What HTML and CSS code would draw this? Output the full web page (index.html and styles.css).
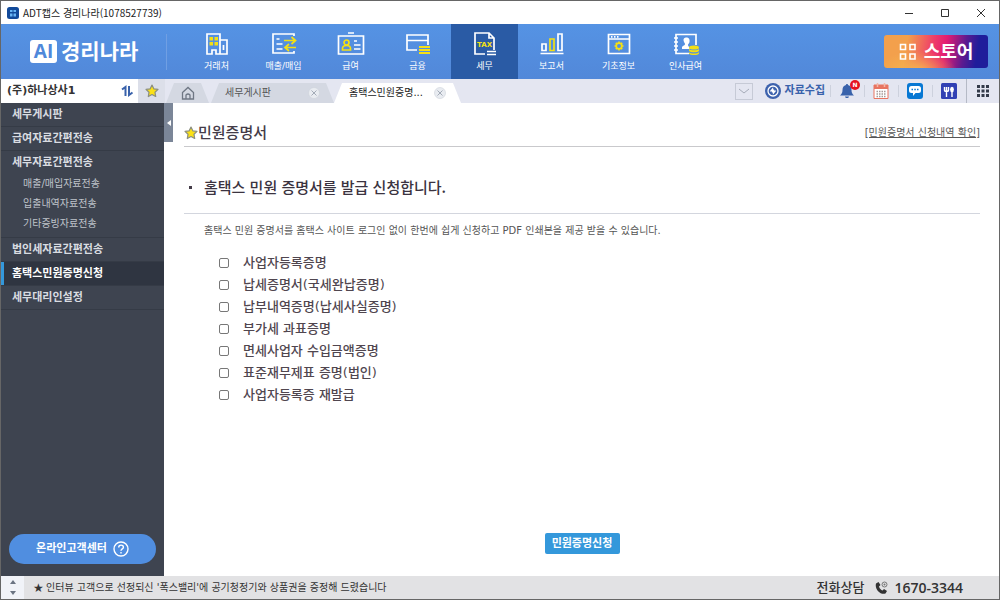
FILE: index.html
```html
<!DOCTYPE html>
<html lang="ko">
<head>
<meta charset="utf-8">
<title>ADT캡스 경리나라</title>
<link rel="stylesheet" href="styles.css">
</head>
<body>
<svg class="defs" aria-hidden="true">
  <symbol id="star" viewBox="0 0 14 14"><path d="M7 1l1.800 3.800 4.200.6-3 2.900.7 4.200L7 10.500l-3.700 2 .7-4.200-3-2.900 4.200-.6z" fill="#fbe116" stroke="#8b8f80" stroke-width="1.200" stroke-linejoin="round"/></symbol>
  <symbol id="close" viewBox="0 0 12 12"><circle cx="6" cy="6" r="5.500" fill="#e9ecf1" stroke="#cdd2da" stroke-width=".6"/><path d="M3.500 3.500l5 5m0-5l-5 5" stroke="#a3abb7" stroke-width="1"/></symbol>
</svg>
<div class="window">
  <div class="titlebar">
    <svg class="app-icon" viewBox="0 0 12 12"><rect width="12" height="12" rx="2.500" fill="#124a9a"/><path d="M3 3h2.500v2H3zM6.500 3H9v2H6.500zM3 6.500h2.500v3H3zM6.500 6.500H9v3H6.500z" fill="#69b6f5"/></svg>
    <span class="app-title">ADT캡스 경리나라(1078527739)</span>
    <button class="win-btn" aria-label="최소화"><svg viewBox="0 0 10 10"><path d="M1 5.500h8" /></svg></button>
    <button class="win-btn" aria-label="최대화"><svg viewBox="0 0 10 10"><path d="M1.500 1.500h7v7h-7z"/></svg></button>
    <button class="win-btn" aria-label="닫기"><svg viewBox="0 0 10 10"><path d="M1 1l8 8M9 1L1 9"/></svg></button>
  </div>

  <header class="header">
    <a class="logo" href="#"><span class="logo-ai">AI</span><span>경리나라</span></a>
    <nav class="nav">
      <a href="#"><svg viewBox="0 0 28 24"><path d="M4 22V2h13v20h-4v-4H9v4zM17 8h7v14h-7M20.500 13v5"/><g class="yf"><rect x="6.500" y="5" width="3.500" height="3.500"/><rect x="11.500" y="5" width="3.500" height="3.500"/><rect x="6.500" y="10" width="3.500" height="3.500"/><rect x="11.500" y="10" width="3.500" height="3.500"/></g></svg>거래처</a>
      <a href="#"><svg viewBox="0 0 28 24"><path d="M24 4V2H3v19h21v-2M6.500 7h3M6.500 12h6M6.500 17h6"/><path class="y" d="M14 8.500H25M21.500 5l4 3.500-4 3.500M26 15.500H15.500M19 12l-4 3.500 4 3.500"/></svg>매출/매입</a>
      <a href="#"><svg viewBox="0 0 28 24"><path d="M1.500 4h25v18h-25zM11 1h6M17 9h3M17 13h6.500M17 17h6.500"/><g class="y"><circle cx="9.500" cy="10.500" r="2.500"/><path d="M5.500 18v-1.500c0-2 1.500-3 4-3s4 1 4 3V18z"/></g></svg>급여</a>
      <a href="#"><svg viewBox="0 0 28 24"><path d="M13 18H3V3h21v10M3 8.500h21"/><path class="y thick" d="M15 15h11M15 18h11M15 21h11"/></svg>금융</a>
      <a href="#" class="active" aria-current="page"><svg viewBox="0 0 28 24"><path d="M14 22H4V1h14l5 5v12M18 1v5h5M16 19.500h9M16 22.500h9"/><text x="6" y="15">TAX</text></svg>세무</a>
      <a href="#"><svg viewBox="0 0 28 24"><path d="M4 12h4v6.500H4zM20 2h4v16.500h-4zM2.500 21.500h23"/><path class="y" d="M12 7h4v11.500h-4z"/></svg>보고서</a>
      <a href="#"><svg viewBox="0 0 28 24"><path d="M3.500 2.500h21v19h-21zM3.500 7h21M6 4.800h1.500M9 4.800h1.500M12 4.800h1.500"/><circle class="y" cx="14" cy="14" r="2.800"/><path class="y" d="M14 9.500v1.700M14 16.800v1.700M9.500 14h1.700M16.800 14h1.700M10.800 10.800l1.200 1.200M16 16l1.200 1.200M17.200 10.800L16 12M12 16l-1.200 1.200"/></svg>기초정보</a>
      <a href="#"><svg viewBox="0 0 28 24"><path d="M17 21.500H4V2.500h20V13M2 6h4M2 10h4M2 14h4M2 18h4"/><path d="M14 5.500c3 0 4 2 3.500 4.500-.3 1.500-1.500 2-1.500 3 0 1.500 1.500 1.500 1.500 3v1H10v-2c1-1.500 3-1.500 3-3 0-1-1.500-2-1.500-4 0-1.500 1-2.500 2.500-2.500z" fill="#fff" stroke="none"/><g class="yf"><ellipse cx="22" cy="15.500" rx="5" ry="2"/><path d="M17 16.800c1 2 9 2 10 0v2c-1 2-9 2-10 0zM17 20c1 2 9 2 10 0v1.500c-1 2-9 2-10 0z"/></g></svg>인사급여</a>
    </nav>
    <a class="store" href="#"><svg viewBox="0 0 18 18"><path d="M1.500 1.500h5v5h-5zM11 1.500h5v5h-5zM1.500 11h5v5h-5zM11 11h5v5h-5z"/></svg>스토어</a>
  </header>

  <div class="subbar">
    <div class="company"><span>(주)하나상사1</span>
      <button class="plain" aria-label="회사 전환"><svg class="swap" viewBox="0 0 13 12"><path d="M1 4.500L4.500 2V11M8 1v9L11.500 7.500" fill="none" stroke="#3962ab" stroke-width="2"/></svg></button>
    </div>
    <button class="plain fav" aria-label="즐겨찾기"><svg class="star"><use href="#star"/></svg></button>
    <div class="tabs">
      <button class="tab home" aria-label="홈"><svg viewBox="0 0 14 14"><path d="M1.500 6.500L7 1.500l5.500 5V13h-11zM5 13V9q2-2 4 0v4" fill="none" stroke="#6f7784" stroke-width="1.300"/></svg></button>
      <button class="tab"><span>세무게시판</span><svg class="close"><use href="#close"/></svg></button>
      <button class="tab current"><span>홈택스민원증명...</span><svg class="close"><use href="#close"/></svg></button>
    </div>
    <div class="tools">
      <button class="plain drop" aria-label="탭 목록"><svg viewBox="0 0 12 8"><path d="M1 2l5 4 5-4" fill="none" stroke="#a5abb8"/></svg></button>
      <button class="plain collect"><svg viewBox="0 0 16 16"><circle cx="8" cy="8" r="8" fill="#3d62ad"/><circle cx="8" cy="8" r="5" fill="none" stroke="#fff" stroke-width="1.300"/><path d="M5.500 8.500L7.500 6v3.500M8.500 6.500V10l2-2.500" fill="none" stroke="#fff" stroke-width="1.300"/></svg>자료수집</button>
      <button class="plain tool" aria-label="알림 N"><svg viewBox="0 0 16 16"><path d="M8 1c.8 0 1 .5 1 1 2.500.6 3.500 2.500 3.500 5 0 3 1 4 2.500 5.500H1C2.500 11 3.500 10 3.500 7c0-2.500 1-4.400 3.500-5 0-.5.200-1 1-1zM6 13.500h4c-.3 2-3.700 2-4 0z" fill="#3962ab"/></svg><span class="badge">N</span></button>
      <button class="plain tool" aria-label="일정"><svg viewBox="0 0 16 16"><path d="M1 2h14v13.500H1z" fill="#fff" stroke="#e87460"/><path d="M1 2h14v4H1z" fill="#e87460"/><path d="M4.500 0v4M11.500 0v4" stroke="#f3b6a8" stroke-width="1.500"/><path d="M3.500 8.500h9M3.500 11h9M3.500 13.500h9" stroke="#a69a98" stroke-width="1.300" stroke-dasharray="1.500 1"/></svg></button>
      <button class="plain tool" aria-label="채팅"><svg viewBox="0 0 16 16"><rect width="16" height="16" rx="3" fill="#0878d3"/><path d="M4.500 3h7Q14 3 14 5.500v2Q14 10 11.500 10H8.500L6 13v-3H4.500Q2 10 2 7.500v-2Q2 3 4.500 3z" fill="#fff"/><path d="M4.500 6.500h1.500M7.300 6.500h1.500M10 6.500h1.500" stroke="#0878d3" stroke-width="1.500"/></svg></button>
      <button class="plain tool" aria-label="식권"><svg viewBox="0 0 16 16"><rect width="16" height="16" rx="1.500" fill="#3040b4"/><path d="M3.500 4v3q0 1.500 2 1.500t2-1.500V4M5.500 4v10" fill="none" stroke="#fff" stroke-width="1.400"/><ellipse cx="11" cy="6.500" rx="1.900" ry="2.700" fill="#fff"/><path d="M11 7v7" stroke="#fff" stroke-width="1.400"/></svg></button>
      <button class="plain tool all" aria-label="전체 메뉴"><svg viewBox="0 0 16 16"><path d="M2 2h3v3H2zM6.500 2h3v3h-3zM11 2h3v3h-3zM2 6.500h3v3H2zM6.500 6.500h3v3h-3zM11 6.500h3v3h-3zM2 11h3v3H2zM6.500 11h3v3h-3zM11 11h3v3h-3z" fill="#333a49"/></svg></button>
    </div>
  </div>

  <div class="body">
    <aside class="sidebar">
      <ul class="menu">
        <li><a href="#">세무게시판</a></li>
        <li><a href="#">급여자료간편전송</a></li>
        <li><a href="#">세무자료간편전송</a>
          <ul class="submenu">
            <li><a href="#">매출/매입자료전송</a></li>
            <li><a href="#">입출내역자료전송</a></li>
            <li><a href="#">기타증빙자료전송</a></li>
          </ul>
        </li>
        <li><a href="#">법인세자료간편전송</a></li>
        <li class="active"><a href="#" aria-current="page">홈택스민원증명신청</a></li>
        <li><a href="#">세무대리인설정</a></li>
      </ul>
      <button class="support">온라인고객센터<svg viewBox="0 0 16 16"><circle cx="8" cy="8" r="7"/><path d="M5.700 6.500c0-3.200 4.800-3 4.700-.3 0 1.700-2.400 1.700-2.400 3.600M8 11v1.500"/></svg></button>
    </aside>
    <button class="collapse" aria-label="메뉴 접기"><svg viewBox="0 0 4 6"><path d="M4 0v6L0 3z" fill="#fff"/></svg></button>
    <main class="content">
      <div class="page-head">
        <svg class="star"><use href="#star"/></svg>
        <h1>민원증명서</h1>
        <a href="#">[민원증명서 신청내역 확인]</a>
      </div>
      <h2>홈택스 민원 증명서를 발급 신청합니다.</h2>
      <p class="desc">홈택스 민원 증명서를 홈택스 사이트 로그인 없이 한번에 쉽게 신청하고 PDF 인쇄본을 제공 받을 수 있습니다.</p>
      <div class="checks">
        <label><input type="checkbox">사업자등록증명</label>
        <label><input type="checkbox">납세증명서(국세완납증명)</label>
        <label><input type="checkbox">납부내역증명(납세사실증명)</label>
        <label><input type="checkbox">부가세 과표증명</label>
        <label><input type="checkbox">면세사업자 수입금액증명</label>
        <label><input type="checkbox">표준재무제표 증명(법인)</label>
        <label><input type="checkbox">사업자등록증 재발급</label>
      </div>
      <button class="submit">민원증명신청</button>
    </main>
  </div>

  <footer class="footer">
    <div class="spin">
      <button class="plain" aria-label="이전 소식"><svg viewBox="0 0 6 4"><path d="M0 4l3-4 3 4z"/></svg></button>
      <button class="plain" aria-label="다음 소식"><svg viewBox="0 0 6 4"><path d="M0 0l3 4 3-4z"/></svg></button>
    </div>
    <p class="notice"><span>★</span>인터뷰 고객으로 선정되신 '폭스밸리'에 공기청정기와 상품권을 증정해 드렸습니다</p>
    <p class="phone"><span>전화상담</span><svg viewBox="0 0 13 13"><path d="M1 2.500L3.500 1l2 3L4 5.500C4.500 7.500 6 9 7.500 9.500L9 8l3 2-1.500 2.500C5 14-.5 8 1 2.500z" fill="#333"/><circle cx="9.500" cy="3.500" r="2.500" fill="none" stroke="#777"/><circle cx="9.500" cy="3.500" r="1" fill="#777"/></svg><strong>1670-3344</strong></p>
  </footer>
</div>
</body>
</html>
```

FILE: styles.css
```css
* { box-sizing: border-box; }
body { margin: 0; font: 10px/16px "DejaVu Sans", "Noto Sans CJK KR", sans-serif; color: #444; }
button { font: inherit; color: inherit; padding: 0; cursor: pointer; }
a { color: inherit; text-decoration: none; }
ul { list-style: none; margin: 0; padding: 0; }
svg { display: block; flex: none; }
.defs { position: absolute; width: 0; height: 0; }
.plain { border: 0; background: none; display: flex; align-items: center; justify-content: center; }
.star { width: 14px; height: 14px; }

.window { min-height: 100vh; display: flex; flex-direction: column; border: 1px solid #666; background: #fff; }

.titlebar { display: flex; align-items: center; height: 23px; padding-left: 6px; font-family: "Noto Sans CJK KR", sans-serif; color: #222; }
.app-icon { width: 12px; height: 12px; margin-right: 4px; }
.app-title { flex: 1; }
.win-btn { display: flex; align-items: center; justify-content: center; width: 36px; height: 23px; border: 0; background: none; }
.win-btn svg { width: 10px; height: 10px; fill: none; stroke: #333; }

.header { display: flex; align-items: center; height: 55px; background: linear-gradient(#5593e4, #5288d9); color: #fff; }
.logo { display: flex; align-items: center; gap: 4px; width: 166px; height: 36px; padding-left: 29px; border-right: 1px solid #709fe3; font-size: 21px; font-weight: 700; line-height: 24px; }
.logo-ai { width: 27px; height: 23px; border-radius: 3px; background: #fff; color: #4f88da; font: 700 19px/23px "Open Sans", sans-serif; text-align: center; }
.nav { display: flex; align-self: stretch; margin-left: 16px; }
.nav a { display: flex; flex-direction: column; align-items: center; gap: 4px; width: 67px; padding-top: 8px; font-size: 9px; line-height: 13px; }
.nav a.active { background: #2a5ba5; }
.nav svg { width: 28px; height: 24px; fill: none; stroke: #fff; stroke-width: 1.7; }
.nav .y { stroke: #f4e014; }
.nav .thick { stroke-width: 2.2; }
.nav .yf { fill: #f4e014; stroke: none; }
.nav text { font: 700 7px "DejaVu Sans", sans-serif; fill: #f4e014; stroke: none; }
.store { display: flex; align-items: center; justify-content: center; gap: 7px; width: 104px; height: 33px; margin: 0 11px 0 auto; border-radius: 3px; background: radial-gradient(ellipse at 32% 110%, #f5b64f 0, #f3a34d00 40%), linear-gradient(100deg, #f3a04c 22%, #ef3e69 46%, #e31c72 58%, #5a1b90 76%, #1f1d9b 88%); font-size: 18px; font-weight: 700; }
.store svg { width: 18px; height: 18px; fill: none; stroke: #fff; stroke-width: 1.6; }

.subbar { display: flex; height: 24px; background: #e4e6f1; }
.company { display: flex; align-items: center; justify-content: space-between; width: 137px; padding: 0 4px 0 6px; background: #fff; font-size: 11px; font-weight: 700; color: #333; }
.swap { width: 13px; height: 12px; }
.fav { width: 27px; background: #dcdfe9; }
.tabs { display: flex; align-items: flex-end; flex: 1; margin-left: 1px; }
.tab { display: flex; align-items: center; justify-content: space-between; width: 123px; height: 20px; padding: 0 14px; border: 0; background: #d4d8e2; color: #555; clip-path: polygon(8px 0, calc(100% - 8px) 0, 100% 100%, 0 100%); }
.tab.home { width: 43px; margin-right: 2px; justify-content: center; padding: 0; }
.tab.home svg { width: 14px; height: 14px; }
.tab.current { width: 127px; padding: 0 15px; background: #fff; color: #222; }
.close { width: 12px; height: 12px; }
.tools { display: flex; align-items: center; }
.drop { width: 18px; height: 17px; margin-right: 12px; border: 1px solid #c6cad6; }
.drop svg { width: 12px; height: 8px; }
.collect { gap: 4px; margin-right: 5px; font-size: 11px; font-weight: 700; color: #3962ab; }
.tools .collect svg, .tool svg { width: 16px; height: 16px; }
.tool { position: relative; width: 34px; height: 24px; }
.tool::before { content: ""; position: absolute; left: 0; top: 6px; width: 1px; height: 12px; background: #cdd1dd; }
.tool.all { width: 33px; }
.tool.all::before { top: 0; height: 24px; background: #b5bac6; }
.badge { position: absolute; left: 20px; top: 1px; width: 10px; height: 10px; border-radius: 50%; background: #e6141e; color: #fff; font-size: 6px; font-weight: 700; line-height: 10px; }

.body { display: flex; align-items: flex-start; flex: 1; }
.sidebar { display: flex; flex-direction: column; justify-content: space-between; align-self: stretch; width: 163px; background: #3e4450; color: #d9dce1; }
.menu > li { border-bottom: 1px solid #353b46; }
.menu > li > a { display: block; padding: 1px 0 0 11px; font-size: 11px; font-weight: 700; line-height: 22px; }
.menu > .active { background: #2f3541; box-shadow: inset 3px 0 #3498db; color: #fff; }
.submenu { padding-bottom: 3px; }
.submenu a { display: block; padding-left: 22px; line-height: 20px; color: #bfc3ca; }
.support { display: flex; align-items: center; justify-content: center; gap: 6px; height: 30px; margin: 0 8px 12px; border: 0; border-radius: 15px; background: #508ee0; color: #fff; font-size: 11px; font-weight: 700; }
.support svg { width: 16px; height: 16px; fill: none; stroke: #fff; stroke-width: 1.4; }
.collapse { display: flex; align-items: center; justify-content: center; width: 9px; height: 39px; border: 0; background: #7b8698; }
.collapse svg { width: 4px; height: 6px; }

.content { flex: 1; align-self: stretch; display: flex; flex-direction: column; padding: 16px 19px 22px 11px; }
.page-head { display: flex; align-items: center; height: 28px; border-bottom: 1px solid #c9c9cc; }
.page-head h1 { flex: 1; margin: 0; font-size: 15px; font-weight: 500; color: #443c48; }
.page-head a { text-decoration: underline; color: #555; }
h2 { display: flex; align-items: center; height: 67px; margin: 0; padding: 14px 0 0 5px; gap: 12px; border-bottom: 1px solid #d3d6de; font-family: "Noto Sans CJK KR", sans-serif; font-size: 15px; font-weight: 500; color: #3b3340; }
h2::before { content: ""; width: 3px; height: 3px; background: #443c48; }
.desc { margin: 9px 20px 14px; color: #555; }
.checks { display: grid; gap: 2px; justify-items: start; padding-left: 35px; }
.checks label { display: flex; align-items: center; gap: 14px; font-size: 13px; font-weight: 500; line-height: 20px; color: #50464f; }
.checks input { appearance: none; width: 10px; height: 10px; margin: 0; border: 1px solid #777; border-radius: 2px; background: #fff; }
.checks input:checked { background: #3498db; }
.submit { align-self: center; width: 75px; height: 21px; margin-top: auto; border: 0; border-radius: 2px; background: #3498db; color: #fff; font-size: 11px; font-weight: 700; }

.footer { display: flex; align-items: center; height: 23px; background: #e2e2e4; color: #333; }
.footer p { margin: 0; display: flex; align-items: center; }
.spin { display: grid; width: 23px; height: 23px; background: #f1f3f8; }
.spin svg { width: 6px; height: 4px; fill: #6b7482; }
.notice { flex: 1; padding-left: 9px; }
.notice span { width: 13px; font-size: 12px; }
.phone { padding-right: 36px; font-size: 13px; font-weight: 500; }
.phone svg { width: 13px; height: 13px; margin: 0 6px 0 11px; }
.phone strong { font: 600 14px/16px "Open Sans", sans-serif; }
```
